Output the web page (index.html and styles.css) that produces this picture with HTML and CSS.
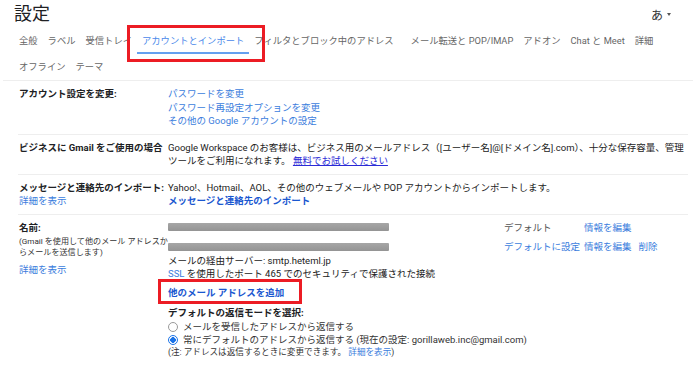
FILE: index.html
```html
<!DOCTYPE html>
<html lang="ja">

<head>
    <meta charset="UTF-8">
    <meta name="viewport" content="width=device-width, initial-scale=1.0">
    <title>設定</title>
    <link rel="stylesheet" href="styles.css">
</head>

<body>
    <header class="top">
        <h1>設定</h1>
        <div class="lang">あ<span class="caret"></span></div>
    </header>

    <nav class="tabs">
        <div class="tab-row">
            <span class="tab">全般</span>
            <span class="tab">ラベル</span>
            <span class="tab">受信トレイ</span>
            <span class="tab active">アカウントとインポート<span class="mark mark-tab"></span></span>
            <span class="tab wide">フィルタとブロック中のアドレス</span>
            <span class="tab">メール転送と POP/IMAP</span>
            <span class="tab">アドオン</span>
            <span class="tab">Chat と Meet</span>
            <span class="tab">詳細</span>
        </div>
        <div class="tab-row">
            <span class="tab">オフライン</span>
            <span class="tab">テーマ</span>
        </div>
    </nav>

    <section class="settings">
        <div class="row">
            <div class="label"><b>アカウント設定を変更:</b></div>
            <div class="value">
                <a class="link">パスワードを変更</a><br>
                <a class="link">パスワード再設定オプションを変更</a><br>
                <a class="link">その他の Google アカウントの設定</a>
            </div>
        </div>

        <div class="row">
            <div class="label"><b>ビジネスに Gmail をご使用の場合</b></div>
            <div class="value">
                Google Workspace のお客様は、ビジネス用のメールアドレス（[ユーザー名]@[ドメイン名].com）、十分な保存容量、管理<br>
                ツールをご利用になれます。 <a class="trial">無料でお試しください</a>
            </div>
        </div>

        <div class="row">
            <div class="label">
                <b>メッセージと連絡先のインポート:</b><br>
                <a class="link">詳細を表示</a>
            </div>
            <div class="value">
                Yahoo!、Hotmail、AOL、その他のウェブメールや POP アカウントからインポートします。<br>
                <a class="link strong">メッセージと連絡先のインポート</a>
            </div>
        </div>

        <div class="row last">
            <div class="label">
                <b>名前:</b>
                <p class="hint">(Gmail を使用して他のメール アドレスか<br>らメールを送信します)</p>
                <a class="link">詳細を表示</a>
            </div>
            <div class="value">
                <div class="addr first">
                    <span class="blur"></span>
                    <span class="muted">デフォルト</span>
                    <span><a class="link">情報を編集</a></span>
                </div>
                <div class="addr">
                    <span class="blur"></span>
                    <span><a class="link">デフォルトに設定</a></span>
                    <span class="actions"><a class="link">情報を編集</a><a class="link">削除</a></span>
                </div>
                <div>メールの経由サーバー: smtp.heteml.jp</div>
                <div><a class="link">SSL</a> を使用したポート 465 でのセキュリティで保護された接続</div>

                <div class="add"><a class="link strong">他のメール アドレスを追加</a><span class="mark mark-add"></span></div>

                <div class="reply-title"><b>デフォルトの返信モードを選択:</b></div>
                <label class="radio"><span class="dot"></span>メールを受信したアドレスから返信する</label>
                <label class="radio"><span class="dot on"></span>常にデフォルトのアドレスから返信する (現在の設定: gorillaweb.inc@gmail.com)</label>
                <div class="note">(注: アドレスは返信するときに変更できます。 <a class="link">詳細を表示</a>)</div>
            </div>
        </div>
    </section>
</body>

</html>
```

FILE: styles.css
```css
* {
    box-sizing: border-box;
}

body {
    margin: 0;
    background: #fff;
    color: #222;
    font-family: Roboto, "Noto Sans CJK JP", sans-serif;
    font-size: 9.5px;
}

a {
    cursor: pointer;
}

b {
    font-weight: 700;
    color: #202124;
}

/* header */

.top {
    height: 28px;
    display: flex;
    align-items: center;
    justify-content: space-between;
    padding: 0 29px 0 14px;
}

.top h1 {
    margin: 0;
    font-size: 18px;
    font-weight: 400;
    color: #202124;
    line-height: 28px;
}

.lang {
    font-size: 12px;
    color: #333;
    display: flex;
    align-items: center;
    gap: 4px;
}

.caret {
    width: 0;
    height: 0;
    border-left: 2.5px solid transparent;
    border-right: 2.5px solid transparent;
    border-top: 3px solid #555;
}

/* tabs */

.tabs {
    margin: 0 7px 0 3px;
    padding-left: 11px;
    border-bottom: 1px solid #eee;
}

.tab-row {
    display: flex;
    height: 26px;
}

.tab {
    position: relative;
    padding: 5px 5px 4px;
    line-height: 15px;
    font-size: 9.3px;
    color: #666;
    border-bottom: 2px solid transparent;
    white-space: nowrap;
}

.tab.wide {
    padding-right: 12px;
}

.tab.active {
    color: #4a88ea;
    border-bottom-color: #64a0f0;
}

/* red annotation boxes */

.mark {
    position: absolute;
    border: 3px solid #ec1c24;
}

.mark-tab {
    left: -10px;
    right: -16px;
    top: -3px;
    bottom: -10px;
}

.mark-add {
    left: -10px;
    top: -7px;
    width: 144px;
    height: 25px;
}

/* settings table */

.settings {
    margin: 0 12px 0 18px;
}

.row {
    display: grid;
    grid-template-columns: 150px 1fr;
    padding: 6px 0;
    border-bottom: 1px solid #eee;
    line-height: 13.5px;
}

.row.last {
    border-bottom: none;
}

.label {
    padding-left: 1px;
}

.link {
    color: #3b7ddd;
}

.link.strong {
    color: #1a57d0;
    font-weight: 700;
}

.trial {
    color: #2a2ad6;
    text-decoration: underline;
}

.hint {
    margin: 2px 0 0;
    font-size: 8.1px;
    line-height: 11px;
    color: #333;
    white-space: nowrap;
}

.label .hint + .link {
    display: block;
    margin-top: 5px;
}

/* sender addresses */

.addr {
    display: grid;
    grid-template-columns: 336px 80px auto;
    align-items: center;
}

.addr.first {
    margin-bottom: 6px;
}

.blur {
    width: 221px;
    height: 8px;
    background: linear-gradient(#a6a6a6, #949494);
    border-radius: 1px;
    filter: blur(0.4px);
}

.muted {
    color: #555;
}

.actions {
    display: flex;
    gap: 7px;
}

.add {
    position: relative;
    margin-top: 5px;
    width: max-content;
}

.reply-title {
    margin-top: 6.5px;
}

.radio {
    display: flex;
    align-items: center;
    margin-top: 2px;
    line-height: 12.5px;
    color: #333;
}

.radio + .radio {
    margin-top: 0;
}

.dot {
    width: 10px;
    height: 10px;
    margin-right: 5px;
    border: 1px solid #9a9a9a;
    border-radius: 50%;
}

.dot.on {
    border-color: #1a73e8;
    background: radial-gradient(circle, #1a73e8 0 2.6px, #fff 3px);
}

.note {
    font-size: 8.6px;
    line-height: 12px;
    color: #333;
}
```
